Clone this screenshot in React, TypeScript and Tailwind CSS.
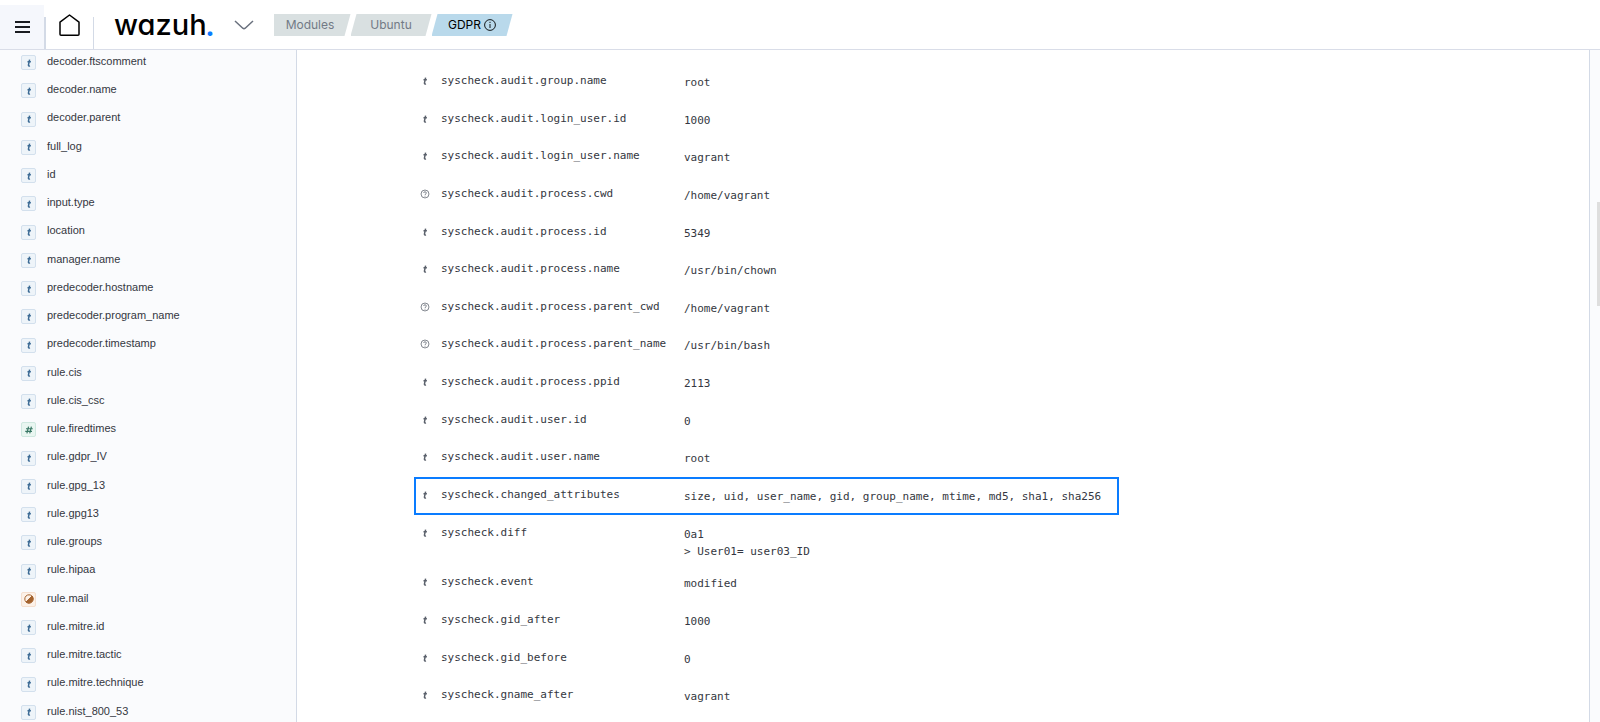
import type { ReactNode } from "react";
import { clsx } from "clsx";

type FieldType = "string" | "number" | "boolean" | "unknown";

interface DocField {
  name: string;
  value: string;
  type?: FieldType;
  highlighted?: boolean;
}

const SIDEBAR_FIELDS: { name: string; type?: FieldType }[] = [
  { name: "decoder.ftscomment" },
  { name: "decoder.name" },
  { name: "decoder.parent" },
  { name: "full_log" },
  { name: "id" },
  { name: "input.type" },
  { name: "location" },
  { name: "manager.name" },
  { name: "predecoder.hostname" },
  { name: "predecoder.program_name" },
  { name: "predecoder.timestamp" },
  { name: "rule.cis" },
  { name: "rule.cis_csc" },
  { name: "rule.firedtimes", type: "number" },
  { name: "rule.gdpr_IV" },
  { name: "rule.gpg_13" },
  { name: "rule.gpg13" },
  { name: "rule.groups" },
  { name: "rule.hipaa" },
  { name: "rule.mail", type: "boolean" },
  { name: "rule.mitre.id" },
  { name: "rule.mitre.tactic" },
  { name: "rule.mitre.technique" },
  { name: "rule.nist_800_53" },
];

const DOC_FIELDS: DocField[] = [
  { name: "syscheck.audit.group.name", value: "root" },
  { name: "syscheck.audit.login_user.id", value: "1000" },
  { name: "syscheck.audit.login_user.name", value: "vagrant" },
  { name: "syscheck.audit.process.cwd", value: "/home/vagrant", type: "unknown" },
  { name: "syscheck.audit.process.id", value: "5349" },
  { name: "syscheck.audit.process.name", value: "/usr/bin/chown" },
  { name: "syscheck.audit.process.parent_cwd", value: "/home/vagrant", type: "unknown" },
  { name: "syscheck.audit.process.parent_name", value: "/usr/bin/bash", type: "unknown" },
  { name: "syscheck.audit.process.ppid", value: "2113" },
  { name: "syscheck.audit.user.id", value: "0" },
  { name: "syscheck.audit.user.name", value: "root" },
  {
    name: "syscheck.changed_attributes",
    value: "size, uid, user_name, gid, group_name, mtime, md5, sha1, sha256",
    highlighted: true,
  },
  { name: "syscheck.diff", value: "0a1\n> User01= user03_ID" },
  { name: "syscheck.event", value: "modified" },
  { name: "syscheck.gid_after", value: "1000" },
  { name: "syscheck.gid_before", value: "0" },
  { name: "syscheck.gname_after", value: "vagrant" },
];

const TOKEN_COLORS: Record<FieldType, string> = {
  string: "border-[#d3e0ed] bg-[#eef4f9] text-[#3b6a94]",
  number: "border-[#cfe8e0] bg-[#e9f6f1] text-[#387765]",
  boolean: "border-[#f5dfcf] bg-[#fcf1e8] text-[#a3622d]",
  unknown: "border-gray-200 bg-gray-100 text-gray-500",
};

function TypeIcon({ type }: { type: FieldType }) {
  if (type === "number") {
    return (
      <svg viewBox="0 0 16 16" className="size-3" fill="none" stroke="currentColor" strokeWidth="1.6" aria-hidden>
        <path d="M7.400 3.500 5.200 12.500M11.200 3.500 9 12.500M4 6.300h9M3 9.700h9" />
      </svg>
    );
  }

  if (type === "boolean") {
    return (
      <svg viewBox="0 0 16 16" className="size-3" fill="none" stroke="currentColor" strokeWidth="1.3" aria-hidden>
        <circle cx="8" cy="8" r="5.600" />
        <path d="M12 4a5.700 5.700 0 0 1-8 8z" fill="currentColor" />
      </svg>
    );
  }

  if (type === "unknown") {
    return (
      <svg viewBox="0 0 16 16" className="size-3" fill="none" stroke="currentColor" aria-hidden>
        <circle cx="8" cy="8" r="5.300" />
        <path d="M6.200 6.700c0-2.300 3.600-2.300 3.600 0 0 1.300-1.800 1.200-1.800 2.600M8 10.300v1.200" />
      </svg>
    );
  }

  return (
    <svg viewBox="0 0 16 16" className="size-3" fill="none" stroke="currentColor" strokeWidth="2" aria-hidden>
      <path d="M8.800 3.600 7.300 10.600c-.3 1.300.6 1.700 2 1.200M6 6.300h4.500" />
    </svg>
  );
}

function Breadcrumb({ first, active, children }: { first?: boolean; active?: boolean; children: ReactNode }) {
  return (
    <li>
      <a
        href="#"
        className={clsx(
          "flex h-[22px] items-center justify-center gap-[3px] text-[12px]",
          first
            ? "w-[77px] pr-1 [clip-path:polygon(0_0,100%_0,calc(100%-6px)_100%,0_100%)]"
            : "w-[81px] [clip-path:polygon(6px_0,100%_0,calc(100%-6px)_100%,0_100%)]",
          active ? "bg-[#b9d9eb] text-black" : "bg-[#d9e0e1] text-[#727a86]",
        )}
      >
        {children}
      </a>
    </li>
  );
}

function Header() {
  return (
    <header className="relative z-10 flex h-[50px] shrink-0 border-b border-[#d9dde8] bg-white pt-[5px]">
      <button type="button" aria-label="Toggle navigation" className="flex w-11 items-center justify-center bg-[#f5f7fc]">
        <svg viewBox="0 0 16 12" className="h-3 w-4" stroke="#1a1c21" strokeWidth="1.8" aria-hidden>
          <path d="M1 1h15M1 6h15M1 11h15" />
        </svg>
      </button>
      <div className="mt-3 flex w-[50px] justify-center border-r border-l-2 border-[#d3dae6]">
        <a href="#" aria-label="Home" className="-mt-[3px]">
          <svg viewBox="0 0 22 23" className="h-[23px] w-[22px]" fill="none" stroke="#000" strokeWidth="1.5" strokeLinejoin="round" aria-hidden>
            <path d="M1 8.200 10.500 1 20 8.200v12a1 1 0 0 1-1 1H2a1 1 0 0 1-1-1z" />
          </svg>
        </a>
      </div>
      <a
        href="#"
        className="ml-5 flex items-center pb-1 font-[Inter] text-[29px] leading-10 font-medium text-black [font-feature-settings:'cv11']"
      >
        wazuh<span className="font-[Lato] font-black text-[#0a7cff]">.</span>
      </a>
      <button type="button" aria-label="Open menu" className="ml-5 flex items-center pb-1">
        <svg viewBox="0 0 20 10" className="h-[10px] w-5" fill="none" stroke="#69707d" strokeWidth="1.5" aria-hidden>
          <path d="m1 1 7.800 7.200q1.200 1 2.400 0L19 1" />
        </svg>
      </button>
      <nav aria-label="Breadcrumb" className="ml-5 pt-[9px] font-[Inter]">
        <ol className="flex">
          <Breadcrumb first>Modules</Breadcrumb>
          <Breadcrumb>Ubuntu</Breadcrumb>
          <Breadcrumb active>
            GDPR
            <svg viewBox="0 0 12 12" className="size-3" fill="none" stroke="currentColor" strokeWidth="0.9" aria-hidden>
              <circle cx="6" cy="6" r="5.400" />
              <path d="M6 5v4M6 2.800V4" />
            </svg>
          </Breadcrumb>
        </ol>
      </nav>
    </header>
  );
}

function FieldSidebar() {
  return (
    <aside className="flex w-[297px] shrink-0 border-r border-[#d3dae6] bg-[#fafbfd]">
      <ul className="-my-[3px] flex flex-1 flex-col text-[11px] text-[#343741]">
        {SIDEBAR_FIELDS.map(({ name, type = "string" }) => (
          <li key={name} className="flex flex-1 items-center pl-[21px]">
            <span className={clsx("mt-[3px] flex size-[15px] items-center justify-center rounded-[2px] border", TOKEN_COLORS[type])}>
              <TypeIcon type={type} />
            </span>
            <button type="button" className="ml-[11px]">
              {name}
            </button>
          </li>
        ))}
      </ul>
    </aside>
  );
}

function DocTable() {
  return (
    <table className="h-full text-left font-['DejaVu_Sans_Mono',monospace] text-[11px] leading-[17px] text-[#343741]">
      <tbody>
        {DOC_FIELDS.map(({ name, value, type = "string", highlighted }) => (
          <tr key={name} className="relative h-[37px] align-top">
            <td className="pt-3 pl-[5px] text-[#5a606b]">
              <TypeIcon type={type} />
              {highlighted && <span className="pointer-events-none absolute inset-0 border-2 border-[#0a7cff]" />}
            </td>
            <th scope="row" className="w-[253px] pt-[9px] pl-[10px] font-normal">
              {name}
            </th>
            <td className="pt-[11px] pr-[18px] pb-1 whitespace-pre">{value}</td>
          </tr>
        ))}
      </tbody>
    </table>
  );
}

export default function App() {
  return (
    <div className="flex h-screen flex-col overflow-hidden bg-[#fafbfd] font-['Liberation_Sans',Arial,sans-serif]">
      <Header />
      <div className="flex min-h-0 flex-1">
        <FieldSidebar />
        <main className="min-w-0 flex-1 border-r border-[#d3dae6] bg-white pt-[13px] pb-[7px] pl-[117px]">
          <DocTable />
        </main>
        <div className="flex w-[10px] justify-end pt-[152px]">
          <div className="h-[104px] w-[3px] bg-[#dedede]" />
        </div>
      </div>
    </div>
  );
}
